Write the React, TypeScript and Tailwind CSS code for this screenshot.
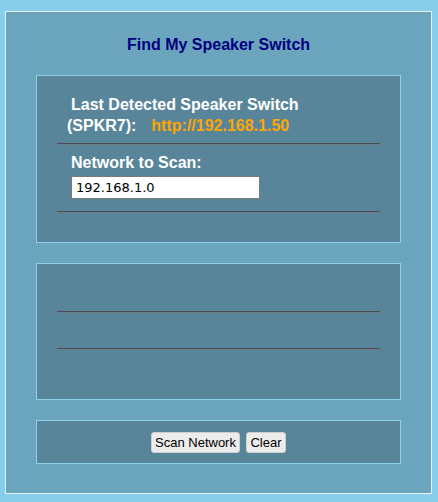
import React from "react";

function Rule() {
  return <div className="mx-[20px] h-[2px] border-t border-b border-t-[#4c4a55] border-b-[#6d7f88]" />;
}

export default function App() {
  return (
    <div className="w-[438px] h-[502px] bg-[#87ceeb] pt-[11px] pl-[5px] font-['Liberation_Sans',Arial,sans-serif]">
      <div className="w-[427px] h-[483px] border border-[#e6f3f9] bg-[#6ba5bd] pt-[24px]">
        <h1 className="text-center text-[16px] leading-[18px] font-bold text-[#000080]">
          Find My Speaker Switch
        </h1>

        <div className="mx-[30px] mt-[21px] h-[168px] border border-[#8fd0ec] bg-[#59859a] pt-[18px]">
          <div className="text-[16px] leading-[21px] font-bold text-white">
            <div className="pl-[34px]">Last Detected Speaker Switch</div>
            <div className="pl-[30px] flex">
              <span>(SPKR7):</span>
              <span className="ml-[15px] text-[#ffa500]">http://192.168.1.50</span>
            </div>
          </div>
          <div className="mt-[7px]">
            <Rule />
          </div>
          <div className="pl-[34px] mt-[7px] text-[16px] leading-[21px] font-bold text-white">
            Network to Scan:
          </div>
          <input
            defaultValue="192.168.1.0"
            className="block ml-[34px] mt-[3px] w-[189px] h-[23px] border border-[#7a7a7a] bg-white px-[4px] text-[13px] text-black font-['DejaVu_Sans',sans-serif] outline-none"
          />
          <div className="mt-[12px]">
            <Rule />
          </div>
        </div>

        <div className="mx-[30px] mt-[20px] h-[137px] border border-[#8fd0ec] bg-[#59859a] pt-[47px]">
          <Rule />
          <div className="mt-[35px]">
            <Rule />
          </div>
        </div>

        <div className="mx-[30px] mt-[20px] h-[44px] border border-[#8fd0ec] bg-[#59859a] pt-[11px] flex justify-center gap-[6px]">
          <button className="w-[89px] h-[21px] rounded-[3px] border border-[#cfcfcf] bg-[#ececec] text-[13px] leading-[19px] text-black">
            Scan Network
          </button>
          <button className="w-[40px] h-[21px] rounded-[3px] border border-[#cfcfcf] bg-[#ececec] text-[13px] leading-[19px] text-black">
            Clear
          </button>
        </div>
      </div>
    </div>
  );
}
